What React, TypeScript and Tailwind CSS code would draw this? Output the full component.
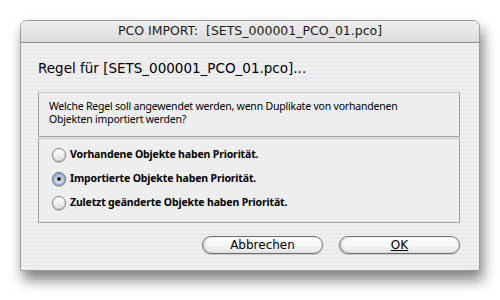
import React from "react";

const font = { fontFamily: '"DejaVu Sans", "Liberation Sans", sans-serif' };
const small = { fontFamily: '"Noto Sans", "DejaVu Sans", sans-serif' };

function Radio({ checked }: { checked?: boolean }) {
  if (checked) {
    return (
      <span className="relative flex h-[14px] w-[14px] shrink-0 items-center justify-center rounded-full border border-[#5b6f8c] bg-[radial-gradient(circle_at_50%_60%,#eef4fb_0%,#b5c8e2_45%,#6f8fb8_100%)] shadow-[0_1px_1px_rgba(0,0,0,0.25)]">
        <span className="h-[4px] w-[4px] rounded-full bg-[#1a1a1a]" />
      </span>
    );
  }
  return (
    <span className="h-[14px] w-[14px] shrink-0 rounded-full border border-[#7c7c7c] bg-[linear-gradient(to_bottom,#ffffff_0%,#f0f0f0_50%,#dcdcdc_100%)] shadow-[0_1px_1px_rgba(0,0,0,0.2)]" />
  );
}

function Button({ children }: { children: React.ReactNode }) {
  return (
    <div className="flex h-[18px] w-[121px] items-center justify-center rounded-full border border-[#6f6f6f] bg-[linear-gradient(to_bottom,#ffffff_0%,#f7f7f7_50%,#e4e4e4_100%)] text-[12px] text-black shadow-[inset_2px_0_2px_rgba(0,0,0,0.15),0_1px_1px_rgba(0,0,0,0.15)]">
      {children}
    </div>
  );
}

export default function App() {
  return (
    <div className="h-[300px] w-[500px] bg-white pl-[20px] pt-[20px]" style={font}>
      <div className="flex h-[251px] w-[460px] flex-col rounded-t-[7px] border border-[#9c9c9c] shadow-[3px_9px_14px_rgba(0,0,0,0.5)]">
        <div className="flex h-[22px] shrink-0 items-center justify-center rounded-t-[6px] border-b border-[#8a8a8a] bg-[linear-gradient(to_bottom,#eeeeee_0%,#dcdcdc_100%)] text-[12.5px] text-[#1a1a1a]">
          PCO IMPORT:&nbsp; [SETS_000001_PCO_01.pco]
        </div>
        <div className="flex flex-1 flex-col bg-[repeating-linear-gradient(to_bottom,#f0f0f0_0px,#f0f0f0_2px,#e9e9e9_2px,#e9e9e9_4px)] pl-[17px] pr-[19px] pt-[17px]">
          <div className="h-[19px] text-[13.5px] leading-[17px] text-black">
            Regel für [SETS_000001_PCO_01.pco]...
          </div>
          <div
            className="mt-[13px] h-[45px] border border-[#a0a0a0] border-t-[#c8c8c8] bg-[#eeeeee] pl-[10px] pt-[7px] text-[10.5px] leading-[13px] tracking-[-0.2px] text-black"
            style={small}
          >
            <div>Welche Regel soll angewendet werden, wenn Duplikate von vorhandenen</div>
            <div>Objekten importiert werden?</div>
          </div>
          <div
            className="mt-[1px] flex h-[85px] flex-col gap-[10px] border border-[#a0a0a0] border-t-[#c8c8c8] bg-[#eeeeee] pl-[13px] pt-[9px] text-[10.5px] font-bold tracking-[-0.15px] text-black"
            style={small}
          >
            <div className="flex h-[14px] items-center gap-[4px]">
              <Radio />
              <span>Vorhandene Objekte haben Priorität.</span>
            </div>
            <div className="flex h-[14px] items-center gap-[4px]">
              <Radio checked />
              <span>Importierte Objekte haben Priorität.</span>
            </div>
            <div className="flex h-[14px] items-center gap-[4px]">
              <Radio />
              <span>Zuletzt geänderte Objekte haben Priorität.</span>
            </div>
          </div>
          <div className="mt-[13px] flex justify-end gap-[16px]">
            <Button>Abbrechen</Button>
            <Button>
              <span className="underline">OK</span>
            </Button>
          </div>
        </div>
      </div>
    </div>
  );
}
